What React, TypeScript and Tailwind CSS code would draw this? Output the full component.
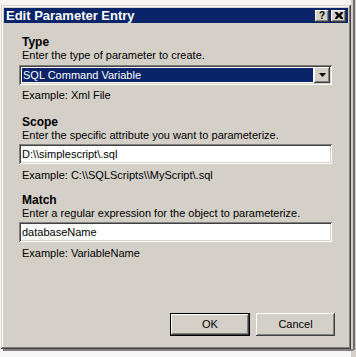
import React from "react";

const raised =
  "shadow-[inset_-1px_-1px_#404040,inset_1px_1px_#ffffff,inset_-2px_-2px_#808080,inset_2px_2px_#d4d0c8]";
const sunken =
  "shadow-[inset_1px_1px_#808080,inset_-1px_-1px_#ffffff,inset_2px_2px_#404040,inset_-2px_-2px_#d4d0c8]";

function Label({ children, className = "" }: { children: React.ReactNode; className?: string }) {
  return <div className={"leading-[13px] " + className}>{children}</div>;
}

function TextBox({ value, className = "" }: { value: string; className?: string }) {
  return (
    <div className={`h-[20px] w-[313px] bg-white ${sunken} pl-[3px] flex items-center ${className}`}>
      <span className="leading-[13px]">{value}</span>
    </div>
  );
}

export default function App() {
  return (
    <div className="w-[356px] h-[357px] bg-[#f6f6f6] relative overflow-hidden font-['Liberation_Sans',Arial,sans-serif] text-[11px] text-black">
      {/* background window fragments */}
      <div className="absolute left-[351px] top-0 w-[5px] h-[357px] bg-[#d4d0c8]">
        <div className="absolute left-[2px] top-[0px] w-[2px] h-[350px] bg-[#6e6e6e]" />
      </div>
      <div className="absolute left-[3px] top-[349px] w-[350px] h-[2px] bg-[#808080]" />

      {/* dialog */}
      <div className="absolute left-[1px] top-[5px] w-[350px] h-[344px] bg-[#d4d0c8] p-[3px] shadow-[inset_-1px_-1px_#404040,inset_1px_1px_#d4d0c8,inset_-2px_-2px_#808080,inset_2px_2px_#ffffff]">
        <div className="h-[15px] bg-[#0a246a] flex items-center justify-between pl-[2px] pr-[2px]">
          <span className="text-white font-bold text-[13px] leading-[14px]">Edit Parameter Entry</span>
          <div className="flex gap-[2px]">
            <div className={`w-[14px] h-[12px] bg-[#d4d0c8] ${raised} flex items-center justify-center text-[10px] font-bold leading-none`}>?</div>
            <div className={`w-[15px] h-[12px] bg-[#d4d0c8] ${raised} flex items-center justify-center`}>
              <svg width="8" height="7" viewBox="0 0 8 7">
                <path d="M0 0h2l2 2 2-2h2v1L6 3.5 8 6v1H6L4 5 2 7H0V6l2-2.5L0 1z" fill="#000" />
              </svg>
            </div>
          </div>
        </div>

        <div className="pl-[18px] pt-[13px]">
          <Label className="font-bold text-[12px]">Type</Label>
          <Label>Enter the type of parameter to create.</Label>
          <div className={`mt-[3px] ml-[-3px] h-[20px] w-[313px] bg-white ${sunken} p-[2px] flex`}>
            <div className="flex-1 bg-[#0a246a] text-white flex items-center pl-[1px] m-[1px]">
              <span className="leading-[13px]">SQL Command Variable</span>
            </div>
            <div className={`w-[16px] h-[16px] bg-[#d4d0c8] ${raised} flex items-center justify-center`}>
              <svg width="7" height="4" viewBox="0 0 7 4"><path d="M0 0h7L3.5 4z" fill="#000" /></svg>
            </div>
          </div>
          <Label className="mt-[4px]">Example: Xml File</Label>

          <Label className="mt-[14px] font-bold text-[12px]">Scope</Label>
          <Label>Enter the specific attribute you want to parameterize.</Label>
          <TextBox className="mt-[2px] ml-[-3px]" value={"D:\\\\simplescript\\.sql"} />
          <Label className="mt-[5px]">{"Example: C:\\\\SQLScripts\\\\MyScript\\.sql"}</Label>

          <Label className="mt-[12px] font-bold text-[12px]">Match</Label>
          <Label>Enter a regular expression for the object to parameterize.</Label>
          <TextBox className="mt-[2px] ml-[-3px]" value="databaseName" />
          <Label className="mt-[5px]">Example: VariableName</Label>

          <div className="mt-[53px] flex justify-end gap-[6px] pr-[13px]">
            <div className="w-[80px] h-[23px] bg-[#d4d0c8] border border-black shadow-[inset_-1px_-1px_#404040,inset_1px_1px_#ffffff,inset_-2px_-2px_#808080] flex items-center justify-center">OK</div>
            <div className={`w-[79px] h-[23px] bg-[#d4d0c8] ${raised} flex items-center justify-center`}>Cancel</div>
          </div>
        </div>
      </div>
    </div>
  );
}
